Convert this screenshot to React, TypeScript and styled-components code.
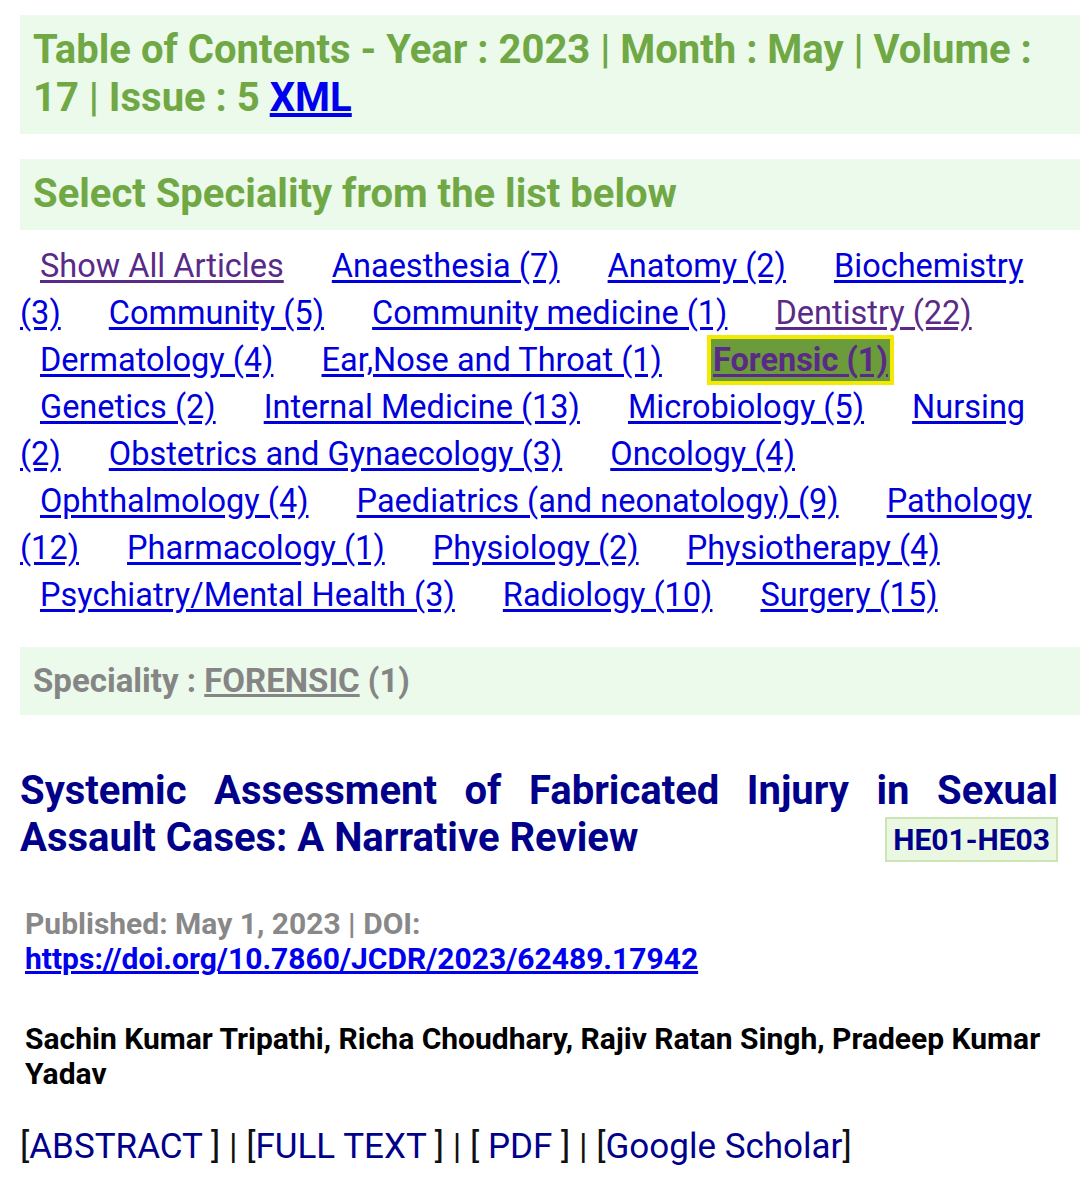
import { Fragment } from 'react'
import styled, { createGlobalStyle } from 'styled-components'

const GlobalStyle = createGlobalStyle`
    html, body {
        margin: 0;
        padding: 0;
        background: #ffffff;
        font-family: 'Roboto', 'Liberation Sans', sans-serif;
    }
`

const Page = styled.div`
    width: 1080px;
    padding-top: 15px;
`

const GreenBox = styled.div<{ $tone?: 'green' | 'grey' }>`
    margin-left: 20px;
    background: #ebfaea;
    padding: ${p => (p.$tone === 'grey' ? '13px 13px 14px' : '11px 13px 12px')};
    font-weight: 700;
    font-size: ${p => (p.$tone === 'grey' ? '33px' : '40px')};
    line-height: ${p => (p.$tone === 'grey' ? '41px' : '48px')};
    color: ${p => (p.$tone === 'grey' ? '#858585' : '#70a845')};
    & + & {
        margin-top: 25px;
    }
`

const XmlLink = styled.a`
    color: #0000ee;
    text-decoration: underline;
`

const GreyLink = styled.a`
    color: #858585;
    text-decoration: underline;
`

const SpecList = styled.div`
    padding: 13px 30px 28px 20px;
    font-size: 32.5px;
    line-height: 47px;
`

const Spec = styled.a<{ $visited?: boolean; $active?: boolean }>`
    padding-left: 20px;
    margin-right: 20px;
    color: ${p => (p.$visited || p.$active ? '#5a2a88' : '#0000dd')};
    text-decoration: underline;
    text-underline-offset: 3px;
    ${p =>
        p.$active &&
        `
        padding: 2px;
        margin-left: 21px;
        background: #6b9b3a;
        outline: 4px solid #f2ea00;
        font-weight: 700;
    `}
`

const Article = styled.div`
    padding: 52px 22px 0 20px;
`

const Title = styled.h2`
    margin: 0;
    font-size: 40px;
    line-height: 47px;
    font-weight: 700;
    color: #00008a;
    text-align: justify;
`

const Pages = styled.span`
    float: right;
    margin-top: 3px;
    padding: 0 6px;
    font-size: 30px;
    line-height: 41px;
    background: #eaf8e2;
    border: 2px solid #cfe4b4;
`

const Meta = styled.div`
    margin-top: 45px;
    padding-left: 5px;
    font-size: 30px;
    line-height: 35px;
    font-weight: 700;
    color: #888888;
`

const DoiLink = styled.a`
    color: #0000ee;
    text-decoration: underline;
`

const Authors = styled.div`
    margin-top: 45px;
    padding-left: 5px;
    font-size: 30px;
    line-height: 35px;
    font-weight: 700;
    color: #000000;
`

const LinkRow = styled.div`
    margin-top: 34px;
    font-size: 35px;
    line-height: 44px;
    color: #111111;
`

const PlainLink = styled.a`
    color: #00008b;
    text-decoration: none;
`

const specialities: { label: string; visited?: boolean; active?: boolean }[] = [
    { label: 'Show All Articles', visited: true },
    { label: 'Anaesthesia (7)' },
    { label: 'Anatomy (2)' },
    { label: 'Biochemistry (3)' },
    { label: 'Community (5)' },
    { label: 'Community medicine (1)' },
    { label: 'Dentistry (22)', visited: true },
    { label: 'Dermatology (4)' },
    { label: 'Ear,Nose and Throat (1)' },
    { label: 'Forensic (1)', active: true },
    { label: 'Genetics (2)' },
    { label: 'Internal Medicine (13)' },
    { label: 'Microbiology (5)' },
    { label: 'Nursing (2)' },
    { label: 'Obstetrics and Gynaecology (3)' },
    { label: 'Oncology (4)' },
    { label: 'Ophthalmology (4)' },
    { label: 'Paediatrics (and neonatology) (9)' },
    { label: 'Pathology (12)' },
    { label: 'Pharmacology (1)' },
    { label: 'Physiology (2)' },
    { label: 'Physiotherapy (4)' },
    { label: 'Psychiatry/Mental Health (3)' },
    { label: 'Radiology (10)' },
    { label: 'Surgery (15)' },
]

const App = () => {
    return (
        <Page>
            <GlobalStyle />
            <GreenBox>
                Table of Contents - Year : 2023 | Month : May | Volume : 17 | Issue : 5 <XmlLink href="#">XML</XmlLink>
            </GreenBox>
            <GreenBox>Select Speciality from the list below</GreenBox>
            <SpecList>
                {specialities.map(s => (
                    <Fragment key={s.label}>
                        <Spec href="#" $visited={s.visited} $active={s.active}>
                            {s.label}
                        </Spec>{' '}
                    </Fragment>
                ))}
            </SpecList>
            <GreenBox $tone="grey">
                Speciality : <GreyLink href="#">FORENSIC</GreyLink> (1)
            </GreenBox>
            <Article>
                <Title>
                    Systemic Assessment of Fabricated Injury in Sexual Assault Cases: A Narrative Review
                    <Pages>HE01-HE03</Pages>
                </Title>
                <Meta>
                    Published: May 1, 2023 | DOI:
                    <br />
                    <DoiLink href="#">https://doi.org/10.7860/JCDR/2023/62489.17942</DoiLink>
                </Meta>
                <Authors>Sachin Kumar Tripathi, Richa Choudhary, Rajiv Ratan Singh, Pradeep Kumar Yadav</Authors>
                <LinkRow>
                    [<PlainLink href="#">ABSTRACT </PlainLink>] | [<PlainLink href="#">FULL TEXT </PlainLink>] | [ <PlainLink href="#">PDF </PlainLink>] | [<PlainLink href="#">Google Scholar</PlainLink>]
                </LinkRow>
            </Article>
        </Page>
    )
}

export default App
